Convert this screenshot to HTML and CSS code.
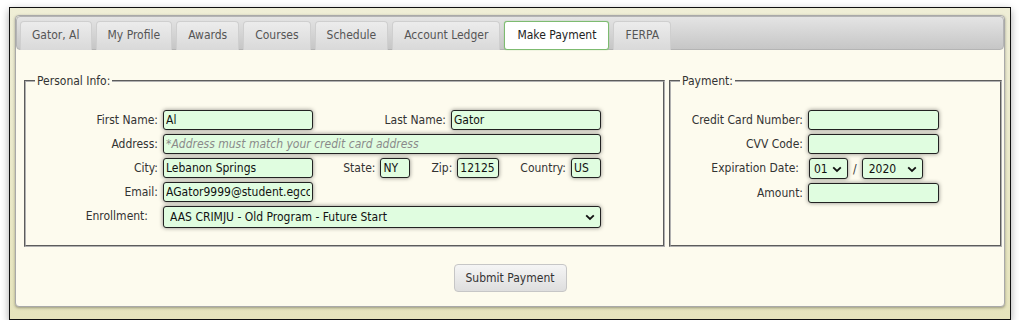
FILE: index.html
```html
<!DOCTYPE html>
<html lang="en">
<head>
  <meta charset="UTF-8" />
  <title>Make Payment</title>
  <link rel="stylesheet" href="styles.css">
</head>
<body>

<div class="frame">
  <div class="tabs">
    <ul class="tab-nav">
      <li>Gator, Al</li>
      <li>My Profile</li>
      <li>Awards</li>
      <li>Courses</li>
      <li>Schedule</li>
      <li>Account Ledger</li>
      <li class="active">Make Payment</li>
      <li>FERPA</li>
    </ul>

    <div class="tab-panel">
      <form class="pay-form" onsubmit="return false;">
        <div class="sections">
          <fieldset class="personal">
            <legend>Personal Info:</legend>
            <div class="personal-grid">
              <label for="firstName">First Name:</label>
              <input type="text" id="firstName" value="Al" />
              <label for="lastName">Last Name:</label>
              <input type="text" id="lastName" value="Gator" />

              <label for="address">Address:</label>
              <input type="text" id="address" class="wide" placeholder="*Address must match your credit card address" />

              <label for="city">City:</label>
              <input type="text" id="city" value="Lebanon Springs" />
              <div class="addr-extra">
                <label for="state">State:</label>
                <input type="text" id="state" class="short" value="NY" />
                <label for="zip" class="spaced">Zip:</label>
                <input type="text" id="zip" class="zip" value="12125" />
                <label for="country" class="spaced">Country:</label>
                <input type="text" id="country" class="short" value="US" />
              </div>

              <label for="email">Email:</label>
              <input type="text" id="email" value="AGator9999@student.egcc.edu" />

              <label for="enrollment" class="row-start indent">Enrollment:</label>
              <div class="select-wrap wide">
                <select id="enrollment">
                  <option>AAS CRIMJU - Old Program - Future Start</option>
                </select>
                <svg class="chev" viewBox="0 0 10 7" width="10" height="7"><path d="M1.2 1.3 L5 5 L8.8 1.3" /></svg>
              </div>
            </div>
          </fieldset>

          <fieldset class="payment">
            <legend>Payment:</legend>
            <div class="payment-grid">
              <label for="ccNumber">Credit Card Number:</label>
              <input type="text" id="ccNumber" />

              <label for="cvv">CVV Code:</label>
              <input type="text" id="cvv" />

              <label for="expMonth" class="indent-small">Expiration Date:</label>
              <div class="exp-row">
                <div class="select-wrap month">
                  <select id="expMonth">
                    <option>01</option><option>02</option><option>03</option>
                    <option>04</option><option>05</option><option>06</option>
                    <option>07</option><option>08</option><option>09</option>
                    <option>10</option><option>11</option><option>12</option>
                  </select>
                  <svg class="chev" viewBox="0 0 10 7" width="10" height="7"><path d="M1.2 1.3 L5 5 L8.8 1.3" /></svg>
                </div>
                <span class="slash">/</span>
                <div class="select-wrap year">
                  <select id="expYear">
                    <option>2020</option><option>2021</option><option>2022</option>
                  </select>
                  <svg class="chev" viewBox="0 0 10 7" width="10" height="7"><path d="M1.2 1.3 L5 5 L8.8 1.3" /></svg>
                </div>
              </div>

              <label for="amount">Amount:</label>
              <input type="text" id="amount" />
            </div>
          </fieldset>
        </div>

        <div class="actions">
          <button type="submit">Submit Payment</button>
        </div>
      </form>
    </div>
  </div>
</div>

</body>
</html>
```

FILE: styles.css
```css
* {
  box-sizing: border-box;
}

body {
  margin: 0;
  background: #fff;
  font-family: 'DejaVu Sans Condensed', 'DejaVu Sans', sans-serif;
  font-size: 12px;
  color: #333;
}

/* khaki window around the tabs */
.frame {
  width: 1002px;
  height: 313px;
  margin: 7px 0 0 9px;
  padding: 7px 5px 0 5px;
  border: 1px solid #111;
  background: linear-gradient(#efeed6, #e6e4bc);
  box-shadow: 0 3px 8px rgba(0, 0, 0, 0.35);
}

.tabs {
  height: 292px;
  background: #fdfbee;
  border: 1px solid #a9a9a9;
  border-radius: 4px;
  box-shadow: 0 1px 3px rgba(0, 0, 0, 0.35);
}

.tab-nav {
  list-style: none;
  margin: 0;
  padding: 4px 3px 0 3px;
  height: 34px;
  display: flex;
  gap: 4px;
  background: linear-gradient(#e4e4e4, #c6c6c6);
  border: 1px solid #b4b4b4;
  border-radius: 4px;
}

.tab-nav li {
  height: 29px;
  padding: 0 11px;
  line-height: 27px;
  color: #555;
  background: linear-gradient(#ececec, #d9d9d9);
  border: 1px solid #cfcfcf;
  border-bottom: none;
  border-radius: 4px 4px 0 0;
}

.tab-nav li.active {
  padding: 0 12px;
  color: #222;
  background: #fff;
  border: 1px solid #7dbb70;
  border-radius: 3px;
  box-shadow: 0 0 1px #7dbb70;
}

.tab-panel {
  padding-top: 24px;
}

.sections {
  display: flex;
  gap: 4px;
  padding-left: 8px;
}

fieldset {
  margin: 0;
  border: 2px groove #b0b0b0;
  padding: 22px 0 17px 0;
}

legend {
  margin-left: 9px;
  padding: 0 2px;
  color: #333;
}

.personal {
  width: 641px;
}

.payment {
  width: 333px;
}

label {
  text-align: right;
  line-height: 20px;
  white-space: nowrap;
}

input,
select {
  height: 20px;
  padding: 0 2px;
  font-family: inherit;
  font-size: 12px;
  color: #111;
  background: #e0fde0;
  border: 1px solid #222;
  border-radius: 3px;
  box-shadow: 0 0 4px rgba(0, 0, 0, 0.45);
  outline: none;
}

input::placeholder {
  font-style: italic;
  color: #8a8a8a;
}

.personal-grid {
  display: grid;
  grid-template-columns: 128px 150px 128px 150px;
  column-gap: 5px;
  row-gap: 4px;
  padding-left: 4px;
}

.personal-grid .wide {
  grid-column: 2 / 5;
}

.row-start {
  grid-column: 1;
}

.indent {
  padding-right: 10px;
}

.addr-extra {
  grid-column: 3 / 5;
  display: flex;
  justify-content: flex-end;
  gap: 5px;
}

.addr-extra .spaced {
  margin-left: 16px;
}

.addr-extra .short {
  width: 30px;
}

.addr-extra .zip {
  width: 42px;
}

.select-wrap {
  position: relative;
  display: flex;
}

.select-wrap select {
  -webkit-appearance: none;
  appearance: none;
  width: 100%;
  padding: 0 6px;
}

.personal-grid .select-wrap select {
  height: 22px;
}

.chev {
  position: absolute;
  right: 6px;
  top: 50%;
  margin-top: -3px;
  pointer-events: none;
}

.chev path {
  fill: none;
  stroke: #111;
  stroke-width: 1.8;
}

.payment-grid {
  display: grid;
  grid-template-columns: 124px 131px;
  column-gap: 5px;
  row-gap: 4px;
  padding-left: 8px;
}

.indent-small {
  padding-right: 4px;
}

.exp-row {
  display: flex;
  align-items: center;
  gap: 4px;
  padding-left: 1px;
}

.exp-row select {
  height: 21px;
  padding: 0 4px;
}

.select-wrap.month {
  width: 39px;
}

.select-wrap.year {
  width: 61px;
}

.select-wrap.year select {
  padding-left: 6px;
}

.slash {
  padding: 0 1px;
}

.actions {
  padding-top: 17px;
  text-align: center;
}

button {
  width: 113px;
  height: 28px;
  font-family: inherit;
  font-size: 12px;
  color: #333;
  background: linear-gradient(#f5f5f5, #dedede);
  border: 1px solid #c6c6c6;
  border-radius: 4px;
  cursor: pointer;
}
```
